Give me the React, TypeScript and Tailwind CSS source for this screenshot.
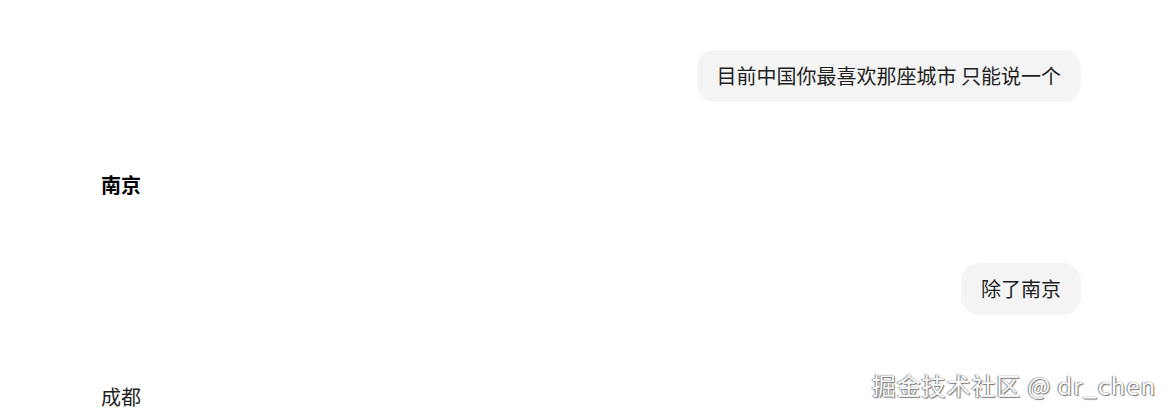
export default function App() {
  const font = { fontFamily: '"Noto Sans CJK SC", "Liberation Sans", sans-serif' };
  return (
    <div className="relative h-[415px] w-[1171px] overflow-hidden bg-white text-[#1f1f1f]" style={font}>
      <div className="ml-[101px] flex w-[980px] flex-col pt-[50px]">
        <div className="flex justify-end">
          <div className="flex h-[52px] items-center rounded-[18px] bg-[#f4f4f4] px-[20px] text-[20px] leading-[28px]">
            目前中国你最喜欢那座城市&nbsp;只能说一个
          </div>
        </div>
        <p className="mt-[69px] text-[20px] font-bold leading-[28px] text-black">南京</p>
        <div className="mt-[64px] flex justify-end">
          <div className="flex h-[52px] items-center rounded-[18px] bg-[#f4f4f4] px-[20px] text-[20px] leading-[28px]">
            除了南京
          </div>
        </div>
        <p className="mt-[68px] text-[20px] leading-[28px]">成都</p>
      </div>
      <div
        className="absolute right-[15px] top-[369px] text-[24px] leading-[32px] tracking-[0.9px] text-white"
        style={{ textShadow: "0 0 1px #666, 1px 1px 1px #777, -1px 0 1px #999" }}
      >
        掘金技术社区 @ dr_chen
      </div>
    </div>
  );
}
